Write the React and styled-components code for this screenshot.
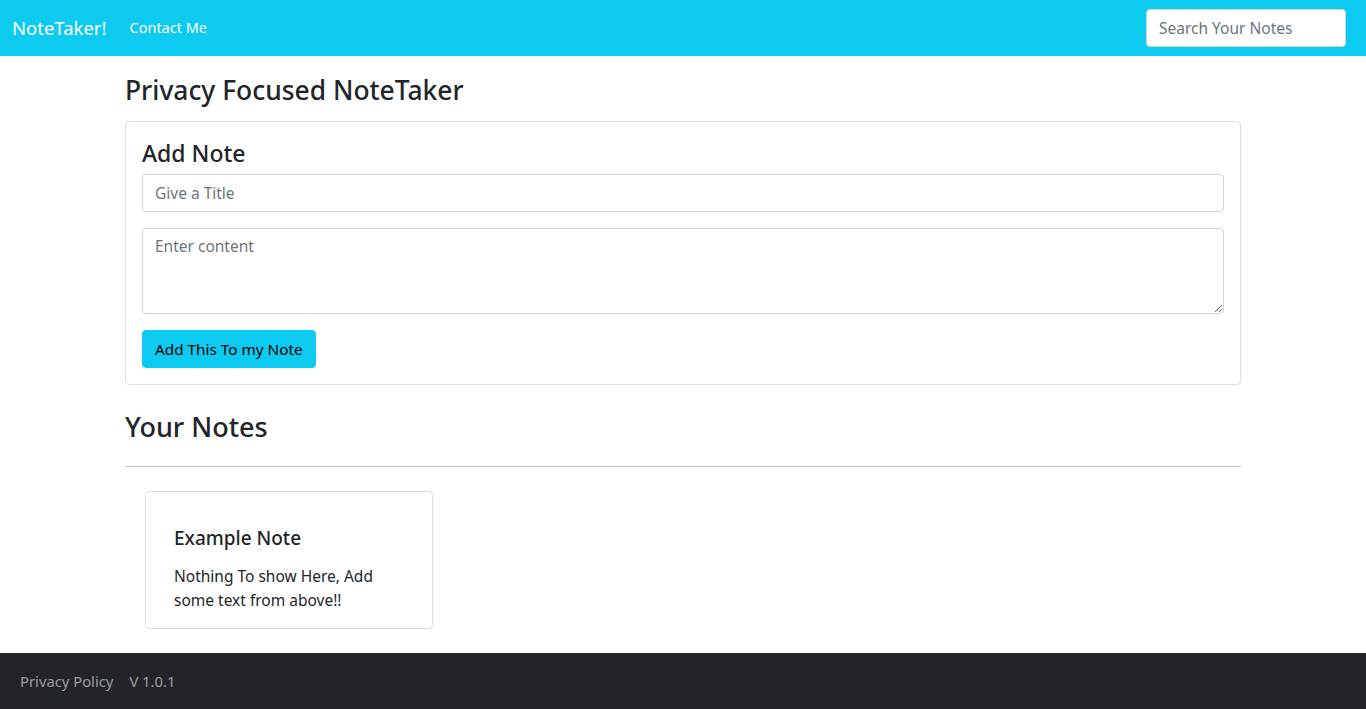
import React from "react";
import styled, { createGlobalStyle } from "styled-components";

const Global = createGlobalStyle`
  * { box-sizing: border-box; }
  body {
    margin: 0;
    font-family: "Noto Sans", "Open Sans", sans-serif;
    font-size: 16px;
    line-height: 1.5;
    color: #212529;
    background: #fff;
  }
`;

const NavBar = styled.nav`
  height: 56px;
  background: #0dcaf0;
  display: flex;
  align-items: center;
  padding: 0 20px 0 12px;
`;

const Brand = styled.a`
  font-size: 18.5px;
  color: #fff;
  margin-right: 15px;
  text-decoration: none;
  line-height: 1.5;
`;

const NavLink = styled.a`
  font-size: 14.5px;
  font-weight: 400;
  color: #fff;
  padding: 8px;
  text-decoration: none;
`;

const SearchInput = styled.input`
  margin-left: auto;
  width: 200px;
  height: 38px;
  border: 1px solid #ced4da;
  border-radius: 4px;
  padding: 6px 12px;
  font: inherit;
  font-size: 15.5px;
  color: #212529;
  &::placeholder { color: #6c757d; }
`;

const Container = styled.main`
  width: 1140px;
  margin: 0 auto;
  padding: 17px 12px 24px;
`;

const PageTitle = styled.h1`
  font-size: 26.4px;
  font-weight: 500;
  line-height: 32px;
  margin: 1px 0 15px;
`;

const Card = styled.section`
  border: 1px solid rgba(0, 0, 0, 0.125);
  border-radius: 4px;
  padding: 16px;
  display: flex;
  flex-direction: column;
  align-items: flex-start;
`;

const CardTitle = styled.h2`
  font-size: 23px;
  font-weight: 500;
  line-height: 28px;
  margin: 1px 0 7px;
`;

const fieldStyles = `
  width: 100%;
  border: 1px solid #ced4da;
  border-radius: 4px;
  padding: 6px 12px;
  font-family: inherit;
  font-size: 15.5px;
  line-height: 1.5;
  color: #212529;
  margin-bottom: 16px;
  &::placeholder { color: #6c757d; }
`;

const TitleInput = styled.input`
  ${fieldStyles}
  height: 38px;
`;

const ContentArea = styled.textarea`
  ${fieldStyles}
  height: 86px;
  resize: vertical;
  display: block;
`;

const PrimaryButton = styled.button`
  background: #0dcaf0;
  border: 1px solid #0dcaf0;
  border-radius: 4px;
  color: #000;
  font-family: inherit;
  font-size: 15.3px;
  line-height: 1.5;
  height: 38px;
  padding: 0 12px;
  cursor: pointer;
`;

const SectionTitle = styled.h2`
  font-size: 27px;
  font-weight: 500;
  line-height: 32px;
  margin: 26px 0 0;
`;

const Divider = styled.hr`
  border: 0;
  border-top: 1px solid #c4c4c4;
  margin: 23px 0 24px;
`;

const NotesGrid = styled.div`
  display: flex;
  flex-wrap: wrap;
  gap: 16px;
  padding: 0 20px;
`;

const NoteCard = styled.article`
  width: 288px;
  border: 1px solid rgba(0, 0, 0, 0.125);
  border-radius: 4px;
  padding: 34px 28px 16px;
`;

const NoteTitle = styled.h3`
  font-size: 19px;
  font-weight: 500;
  line-height: 24px;
  margin: 0 0 14px;
`;

const NoteText = styled.p`
  font-size: 15.5px;
  line-height: 24px;
  margin: 0;
`;

const Footer = styled.footer`
  height: 56px;
  background: #212529;
  display: flex;
  align-items: center;
  gap: 16px;
  padding: 0 20px;
`;

const FooterLink = styled.a`
  color: rgba(255, 255, 255, 0.55);
  font-size: 14.8px;
  font-weight: 400;
  text-decoration: none;
`;

export default function App() {
  return (
    <>
      <Global />
      <NavBar>
        <Brand href="#">NoteTaker!</Brand>
        <NavLink href="#">Contact Me</NavLink>
        <SearchInput type="search" placeholder="Search Your Notes" />
      </NavBar>
      <Container>
        <PageTitle>Privacy Focused NoteTaker</PageTitle>
        <Card>
          <CardTitle>Add Note</CardTitle>
          <TitleInput type="text" placeholder="Give a Title" />
          <ContentArea placeholder="Enter content" />
          <PrimaryButton>Add This To my Note</PrimaryButton>
        </Card>
        <SectionTitle>Your Notes</SectionTitle>
        <Divider />
        <NotesGrid>
          <NoteCard>
            <NoteTitle>Example Note</NoteTitle>
            <NoteText>Nothing To show Here, Add some text from above!!</NoteText>
          </NoteCard>
        </NotesGrid>
      </Container>
      <Footer>
        <FooterLink href="#">Privacy Policy</FooterLink>
        <FooterLink href="#">V 1.0.1</FooterLink>
      </Footer>
    </>
  );
}
